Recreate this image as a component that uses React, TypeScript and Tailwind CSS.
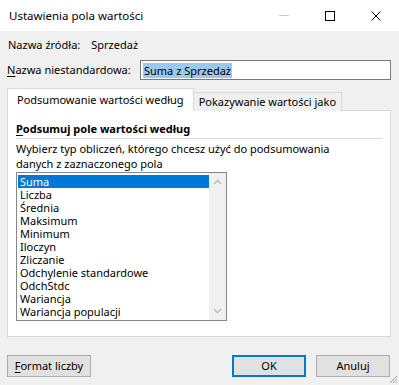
import React from "react";

const items = [
  "Suma",
  "Liczba",
  "Średnia",
  "Maksimum",
  "Minimum",
  "Iloczyn",
  "Zliczanie",
  "Odchylenie standardowe",
  "OdchStdc",
  "Wariancja",
  "Wariancja populacji",
];

export default function App() {
  return (
    <div
      className="w-[399px] h-[385px] bg-[#f0f0f0] text-[11px] text-black flex flex-col overflow-hidden relative"
      style={{ fontFamily: '"Segoe UI", "Noto Sans", sans-serif' }}
    >
      {/* Title bar */}
      <div className="h-[31px] bg-white flex items-center shrink-0">
        <div className="pl-[9px] flex-1 text-[11.5px]">Ustawienia pola wartości</div>
        <div className="w-[46px] h-full flex items-center justify-center">
          <div className="w-[10px] h-px bg-[#c8c8c8]" />
        </div>
        <div className="w-[46px] h-full flex items-center justify-center">
          <div className="w-[10px] h-[10px] border border-black" />
        </div>
        <div className="w-[46px] h-full flex items-center justify-center">
          <svg width="10" height="10" viewBox="0 0 10 10">
            <path d="M0.5 0.5 L9.5 9.5 M9.5 0.5 L0.5 9.5" stroke="black" strokeWidth="1" />
          </svg>
        </div>
      </div>

      {/* Source name */}
      <div className="flex items-center h-[26px] mt-[1px] pl-[8px]">
        <span>Nazwa źródła:</span>
        <span className="ml-[11px]">Sprzedaż</span>
      </div>

      {/* Custom name */}
      <div className="flex items-center h-[20px] mt-[2px] pl-[7px] pr-[8px]">
        <span className="w-[133px] whitespace-nowrap">
          <span className="underline underline-offset-2">N</span>azwa niestandardowa:
        </span>
        <div className="flex-1 h-[20px] bg-white border border-[#7a7a7a] flex items-center pl-[2px]">
          <span className="bg-[#99c9ef] leading-[15px] px-px">Suma z Sprzedaż</span>
        </div>
      </div>

      {/* Tabs */}
      <div className="flex items-end mt-[8px] pl-[7px] h-[23px] relative z-10">
        <div className="h-[23px] px-[9px] bg-white border border-b-0 border-[#d9d9d9] flex items-center whitespace-nowrap">
          Podsumowanie wartości według
        </div>
        <div className="h-[19px] px-[5px] bg-[#f0f0f0] border border-l-0 border-b-0 border-[#d9d9d9] flex items-center whitespace-nowrap">
          Pokazywanie wartości jako
        </div>
      </div>

      {/* Panel */}
      <div className="ml-[7px] mr-[8px] h-[227px] -mt-px bg-white border border-[#d9d9d9] px-[8px] pt-[9px] flex flex-col">
        <div className="font-bold h-[17px] leading-[17px]">
          <span className="underline underline-offset-2">P</span>odsumuj pole wartości według
        </div>
        <div className="h-px bg-[#dcdcdc] mt-[1px]" />
        <div className="mt-[2px] leading-[15px]">
          Wybierz typ obliczeń, którego chcesz użyć do podsumowania
          <br />
          danych z zaznaczonego pola
        </div>
        <div className="mt-[1px] w-[211px] h-[149px] border border-[#828790] flex">
          <div className="flex-1 pt-[2px] pl-px">
            {items.map((it, i) => (
              <div
                key={it}
                className={
                  "h-[13px] leading-[13px] pl-[2px] whitespace-nowrap " +
                  (i === 0 ? "bg-[#0078d7] text-white" : "")
                }
              >
                {it}
              </div>
            ))}
          </div>
          <div className="w-[17px] bg-[#f0f0f0] flex flex-col justify-between items-center py-[6px]">
            <svg width="9" height="6" viewBox="0 0 9 6">
              <path d="M1 5 L4.5 1.5 L8 5" stroke="#c0c0c0" strokeWidth="1.6" fill="none" />
            </svg>
            <svg width="9" height="6" viewBox="0 0 9 6">
              <path d="M1 1 L4.5 4.5 L8 1" stroke="#c0c0c0" strokeWidth="1.6" fill="none" />
            </svg>
          </div>
        </div>
      </div>

      {/* Buttons */}
      <div className="flex items-center mt-[18px] pl-[7px] pr-[9px]">
        <button className="w-[84px] h-[22px] bg-[#e1e1e1] border border-[#adadad] flex items-center justify-center">
          <span>
            <span className="underline underline-offset-2">F</span>ormat liczby
          </span>
        </button>
        <div className="flex-1" />
        <button className="w-[74px] h-[22px] bg-[#e1e1e1] border-2 border-[#0078d7] flex items-center justify-center">
          OK
        </button>
        <button className="ml-[10px] w-[74px] h-[22px] bg-[#e1e1e1] border border-[#adadad] flex items-center justify-center">
          Anuluj
        </button>
      </div>

      {/* resize grip */}
      <svg className="absolute right-[1px] bottom-[1px]" width="10" height="10" viewBox="0 0 10 10">
        <path d="M9 2 L2 9 M9 5 L5 9 M9 8 L8 9" stroke="#a0a0a0" strokeWidth="1" />
      </svg>
    </div>
  );
}
